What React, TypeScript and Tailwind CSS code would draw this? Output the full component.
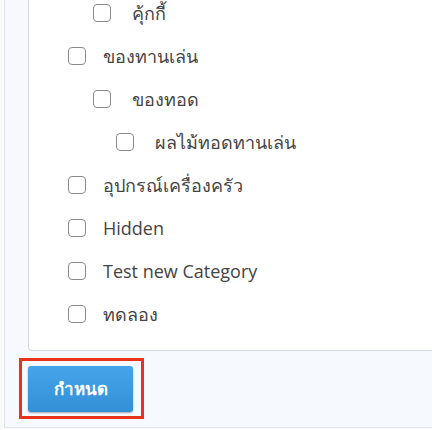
const items = [
  { label: "คุ้กกี้", level: 1 },
  { label: "ของทานเล่น", level: 0 },
  { label: "ของทอด", level: 1 },
  { label: "ผลไม้ทอดทานเล่น", level: 2 },
  { label: "อุปกรณ์เครื่องครัว", level: 0 },
  { label: "Hidden", level: 0 },
  { label: "Test new Category", level: 0 },
  { label: "ทดลอง", level: 0 },
]

const indent = ["pl-[39px]", "pl-[64px]", "pl-[87px]"]
const gap = ["gap-[17px]", "gap-[21px]", "gap-[21px]"]

const App = () => {
  return (
    <div className="h-[430px] w-[432px] overflow-hidden bg-[#fafafa] pl-[4px] font-['Open_Sans',sans-serif]">
      <div className="flex h-[428px] flex-col border-b border-l border-[#e2e4e6] bg-[#f6faff] pl-[23px]">
        <div className="-mt-[9px] rounded-bl-[4px] border-b border-l border-[#d6d9dc] bg-white pb-[15px]">
          {items.map((item) => (
            <label
              key={item.label}
              className={`flex h-[43px] items-center ${indent[item.level]} ${gap[item.level]}`}>
              <span className="h-[18px] w-[18px] shrink-0 rounded-[4px] border border-[#8a8a8a] bg-white" />
              <span className="text-[18px] leading-none text-[#444]">{item.label}</span>
            </label>
          ))}
        </div>
        <div className="ml-[-9px] mt-[7px] w-[125px] border-[3px] border-[#e8321c] pb-[4px] pl-[6px] pr-[8px] pt-[5px]">
          <button className="flex h-[46px] w-[105px] items-center justify-center rounded-[3px] bg-gradient-to-b from-[#45a5ea] to-[#338fd6] text-[17px] font-bold text-white shadow-[0_1px_2px_rgba(0,0,0,0.35)]">
            กำหนด
          </button>
        </div>
      </div>
    </div>
  )
}

export default App
